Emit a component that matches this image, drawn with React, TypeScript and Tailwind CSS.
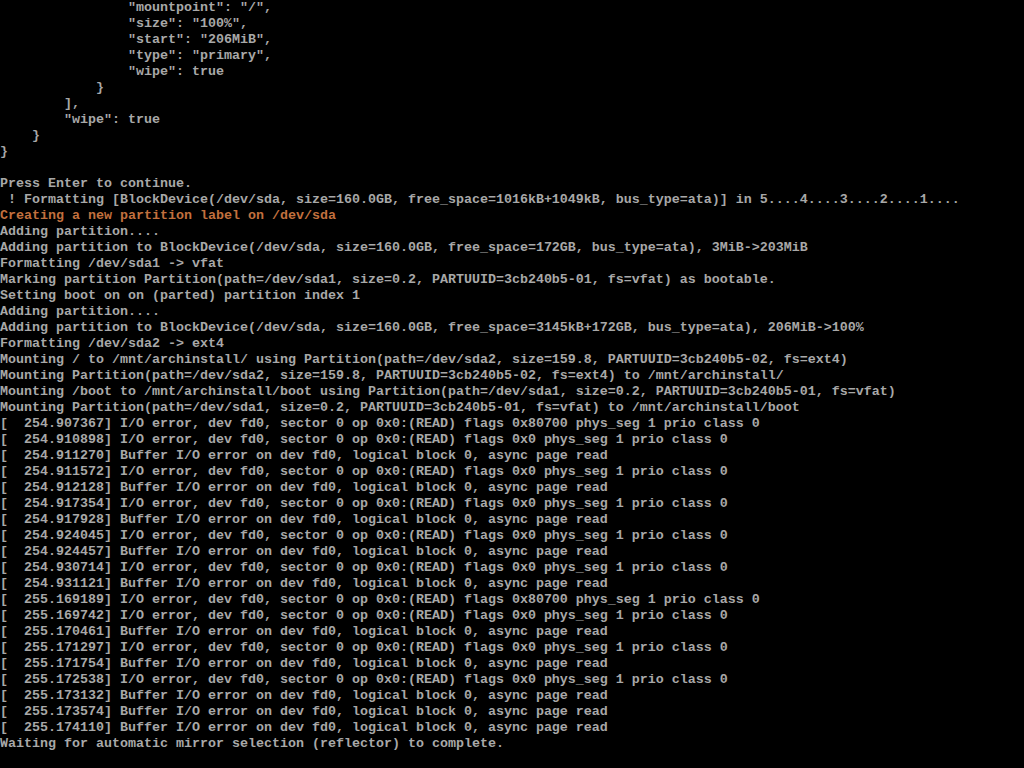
const lines: { text: string; tone?: "warn" }[] = [
  { text: '                "mountpoint": "/",' },
  { text: '                "size": "100%",' },
  { text: '                "start": "206MiB",' },
  { text: '                "type": "primary",' },
  { text: '                "wipe": true' },
  { text: "            }" },
  { text: "        ]," },
  { text: '        "wipe": true' },
  { text: "    }" },
  { text: "}" },
  { text: "" },
  { text: "Press Enter to continue." },
  {
    text: " ! Formatting [BlockDevice(/dev/sda, size=160.0GB, free_space=1016kB+1049kB, bus_type=ata)] in 5....4....3....2....1....",
  },
  { text: "Creating a new partition label on /dev/sda", tone: "warn" },
  { text: "Adding partition...." },
  {
    text: "Adding partition to BlockDevice(/dev/sda, size=160.0GB, free_space=172GB, bus_type=ata), 3MiB->203MiB",
  },
  { text: "Formatting /dev/sda1 -> vfat" },
  {
    text: "Marking partition Partition(path=/dev/sda1, size=0.2, PARTUUID=3cb240b5-01, fs=vfat) as bootable.",
  },
  { text: "Setting boot on on (parted) partition index 1" },
  { text: "Adding partition...." },
  {
    text: "Adding partition to BlockDevice(/dev/sda, size=160.0GB, free_space=3145kB+172GB, bus_type=ata), 206MiB->100%",
  },
  { text: "Formatting /dev/sda2 -> ext4" },
  {
    text: "Mounting / to /mnt/archinstall/ using Partition(path=/dev/sda2, size=159.8, PARTUUID=3cb240b5-02, fs=ext4)",
  },
  {
    text: "Mounting Partition(path=/dev/sda2, size=159.8, PARTUUID=3cb240b5-02, fs=ext4) to /mnt/archinstall/",
  },
  {
    text: "Mounting /boot to /mnt/archinstall/boot using Partition(path=/dev/sda1, size=0.2, PARTUUID=3cb240b5-01, fs=vfat)",
  },
  {
    text: "Mounting Partition(path=/dev/sda1, size=0.2, PARTUUID=3cb240b5-01, fs=vfat) to /mnt/archinstall/boot",
  },
];

// kernel messages: [timestamp, kind]  io = I/O error, buf = Buffer I/O error
const kernel: [string, "io" | "io80700" | "buf"][] = [
  ["254.907367", "io80700"],
  ["254.910898", "io"],
  ["254.911270", "buf"],
  ["254.911572", "io"],
  ["254.912128", "buf"],
  ["254.917354", "io"],
  ["254.917928", "buf"],
  ["254.924045", "io"],
  ["254.924457", "buf"],
  ["254.930714", "io"],
  ["254.931121", "buf"],
  ["255.169189", "io80700"],
  ["255.169742", "io"],
  ["255.170461", "buf"],
  ["255.171297", "io"],
  ["255.171754", "buf"],
  ["255.172538", "io"],
  ["255.173132", "buf"],
  ["255.173574", "buf"],
  ["255.174110", "buf"],
];

const kernelText = (ts: string, kind: "io" | "io80700" | "buf") => {
  if (kind == "buf") {
    return `[  ${ts}] Buffer I/O error on dev fd0, logical block 0, async page read`;
  }
  const flags = kind == "io80700" ? "0x80700" : "0x0";
  return `[  ${ts}] I/O error, dev fd0, sector 0 op 0x0:(READ) flags ${flags} phys_seg 1 prio class 0`;
};

const App = () => {
  const all = [
    ...lines,
    ...kernel.map(([ts, kind]) => ({ text: kernelText(ts, kind) })),
    { text: "Waiting for automatic mirror selection (reflector) to complete." },
  ];
  return (
    <div className="w-[1024px] h-[768px] bg-black overflow-hidden font-['Liberation_Mono',monospace] text-[13.333px] leading-[16px] font-bold text-[#a8a8a8]">
      {all.map((line, i) => {
        return (
          <div
            key={i}
            className={
              line.tone == "warn"
                ? "h-4 whitespace-pre text-[#c2703e]"
                : "h-4 whitespace-pre"
            }
          >
            {line.text}
          </div>
        );
      })}
    </div>
  );
};

export default App;
